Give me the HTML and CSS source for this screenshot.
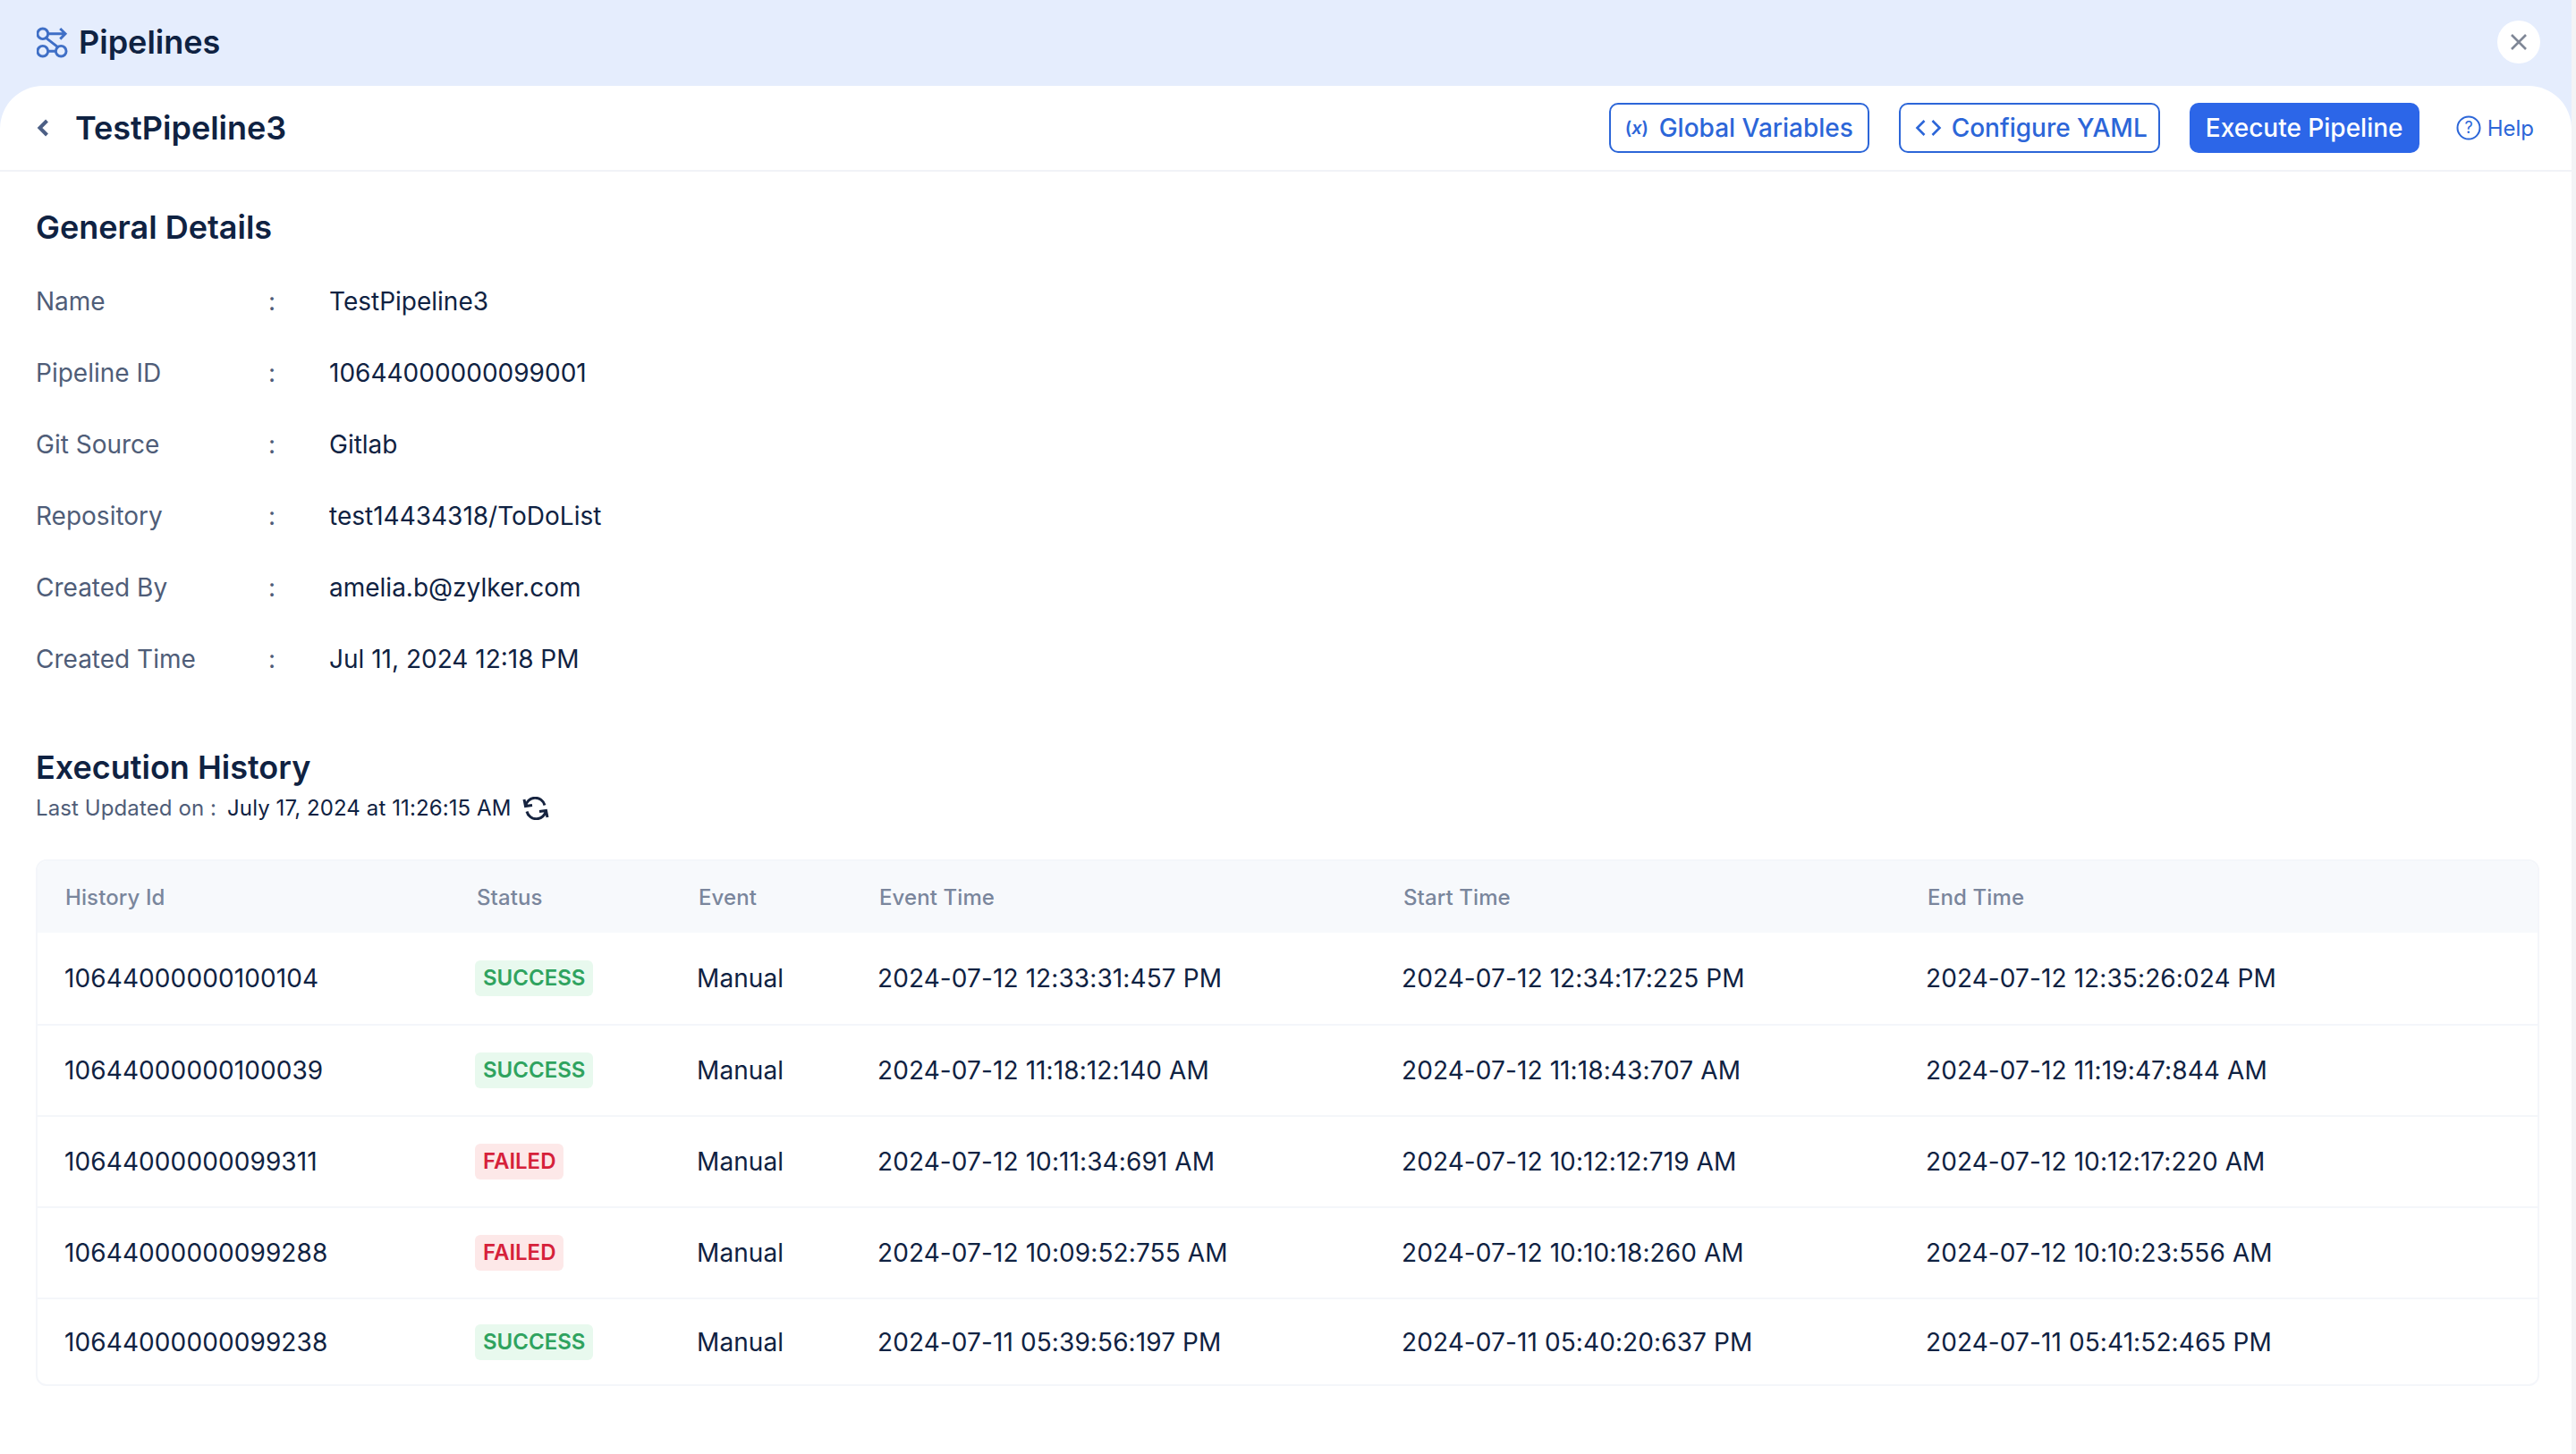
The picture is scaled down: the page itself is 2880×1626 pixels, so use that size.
FILE: index.html
```html
<!DOCTYPE html>
<html lang="en">
<head>
<meta charset="utf-8">
<title>Pipelines</title>
<link rel="stylesheet" href="styles.css">
</head>
<body>
<div class="app">
  <header class="topbar">
    <div class="brand">
      <svg class="brand-icon" viewBox="0 0 36 36" fill="none" stroke="#3f6fc6" stroke-width="3">
        <circle cx="7" cy="8" r="6"/><circle cx="7" cy="28" r="6"/><circle cx="28" cy="28" r="6"/>
        <path d="M13 8H33M27 2L33 8L27 14M11 13L24 23M13 28H22"/>
      </svg>
      <span class="brand-name">Pipelines</span>
    </div>
    <button class="close" aria-label="Close">
      <svg viewBox="0 0 20 20" fill="none" stroke="#7f8796" stroke-width="2.6"><path d="M2 2L18 18M18 2L2 18"/></svg>
    </button>
  </header>
  <main class="panel">
    <div class="subbar">
      <div class="title-group">
        <svg class="back" viewBox="0 0 14 20" fill="none" stroke="#4c5f85" stroke-width="4"><path d="M11.500 2L3.500 10L11.500 18"/></svg>
        <h1 class="title">TestPipeline3</h1>
      </div>
      <div class="actions">
        <button class="btn btn-outline btn-vars"><span class="fx">(<i>x</i>)</span>Global Variables</button>
        <button class="btn btn-outline btn-yaml">
          <svg class="code" viewBox="0 0 30 20" fill="none" stroke="#2c66d8" stroke-width="2.600"><path d="M10.500 2L2.500 10L10.500 18M19.500 2L27.500 10L19.500 18"/></svg>
          Configure YAML
        </button>
        <button class="btn btn-solid">Execute Pipeline</button>
        <a class="help">
          <svg class="help-icon" viewBox="0 0 28 28" fill="none"><circle cx="14" cy="14" r="12.500" stroke="#2c66d8" stroke-width="2"/><text x="14" y="20" text-anchor="middle" class="help-q">?</text></svg>
          Help
        </a>
      </div>
    </div>
    <div class="content">
      <h2 class="section-title">General Details</h2>
      <dl class="details">
        <div class="detail"><dt>Name</dt><dd>TestPipeline3</dd></div>
        <div class="detail"><dt>Pipeline ID</dt><dd>10644000000099001</dd></div>
        <div class="detail"><dt>Git Source</dt><dd>Gitlab</dd></div>
        <div class="detail"><dt>Repository</dt><dd>test14434318/ToDoList</dd></div>
        <div class="detail"><dt>Created By</dt><dd>amelia.b@zylker.com</dd></div>
        <div class="detail"><dt>Created Time</dt><dd>Jul 11, 2024 12:18 PM</dd></div>
      </dl>
      <h2 class="section-title history-title">Execution History</h2>
      <p class="updated">
        <span class="updated-label">Last Updated on :</span>
        <span class="updated-value">July 17, 2024 at 11:26:15 AM</span>
        <svg class="refresh" viewBox="0 0 30 26" fill="none" stroke="#16233f" stroke-width="3"><path d="M3.500 10.500A11 11 0 0 1 25 9.500M2 3L3.500 10.500L11 9.500M26.500 15.500A11 11 0 0 1 5 16.500M28 23L26.500 15.500L19 16.500"/></svg>
      </p>
      <table class="history">
        <colgroup><col class="c1"><col class="c2"><col class="c3"><col class="c4"><col class="c5"><col></colgroup>
        <thead>
          <tr><th>History Id</th><th>Status</th><th>Event</th><th>Event Time</th><th>Start Time</th><th>End Time</th></tr>
        </thead>
        <tbody>
          <tr><td>10644000000100104</td><td><span class="badge ok">SUCCESS</span></td><td>Manual</td><td>2024-07-12 12:33:31:457 PM</td><td>2024-07-12 12:34:17:225 PM</td><td>2024-07-12 12:35:26:024 PM</td></tr>
          <tr><td>10644000000100039</td><td><span class="badge ok">SUCCESS</span></td><td>Manual</td><td>2024-07-12 11:18:12:140 AM</td><td>2024-07-12 11:18:43:707 AM</td><td>2024-07-12 11:19:47:844 AM</td></tr>
          <tr><td>10644000000099311</td><td><span class="badge bad">FAILED</span></td><td>Manual</td><td>2024-07-12 10:11:34:691 AM</td><td>2024-07-12 10:12:12:719 AM</td><td>2024-07-12 10:12:17:220 AM</td></tr>
          <tr><td>10644000000099288</td><td><span class="badge bad">FAILED</span></td><td>Manual</td><td>2024-07-12 10:09:52:755 AM</td><td>2024-07-12 10:10:18:260 AM</td><td>2024-07-12 10:10:23:556 AM</td></tr>
          <tr><td>10644000000099238</td><td><span class="badge ok">SUCCESS</span></td><td>Manual</td><td>2024-07-11 05:39:56:197 PM</td><td>2024-07-11 05:40:20:637 PM</td><td>2024-07-11 05:41:52:465 PM</td></tr>
        </tbody>
      </table>
    </div>
  </main>
</div>
</body>
</html>
```
FILE: styles.css
```css
* { box-sizing: border-box; }
html, body { margin: 0; height: 100%; }
body {
  font-family: Inter, "Liberation Sans", sans-serif;
  color: #0f2242;
  background: #e5edfd;
}
.app { height: 1626px; display: flex; flex-direction: column; border-right: 5px solid #f3f4f6; overflow: hidden; }
.topbar { height: 96px; flex: none; display: flex; align-items: center; justify-content: space-between; padding: 0 35px 2px 41px; }
.brand { display: flex; align-items: center; gap: 12px; }
.brand-icon { width: 35px; height: 35px; }
.brand-name { font-size: 36px; font-weight: 600; line-height: 44px; }
.close { width: 48px; height: 48px; border: 0; padding: 14px; border-radius: 50%; background: #fff; display: flex; }
.close svg { width: 20px; height: 20px; }
.panel { flex: 1; background: #fff; border-radius: 48px 48px 0 0; min-height: 0; }
.subbar { height: 96px; display: flex; align-items: center; justify-content: space-between; padding: 0 42px 0 41px; border-bottom: 2px solid #f1f3f7; }
.title-group { display: flex; align-items: center; gap: 29px; }
.back { width: 14px; height: 20px; }
.title { margin: 0; font-size: 36px; font-weight: 600; line-height: 44px; }
.actions { display: flex; align-items: center; }
.btn { height: 56px; font-family: inherit; font-size: 28px; font-weight: 500; border-radius: 10px; display: flex; align-items: center; justify-content: center; padding: 0; white-space: nowrap; }
.btn-outline { background: #fff; color: #2c66d8; border: 2px solid #2c66d8; justify-content: flex-start; padding-left: 16px; }
.btn-vars { width: 291px; margin-right: 33px; gap: 12px; }
.btn-yaml { width: 292px; margin-right: 33px; gap: 11px; }
.btn-solid { width: 257px; background: #2c66e8; color: #fff; border: 0; margin-right: 41px; }
.fx { width: 26px; text-align: center; font-size: 20px; letter-spacing: 0; font-weight: 600; }
.code { width: 30px; height: 20px; }
.help { display: flex; align-items: center; gap: 7px; font-size: 24px; color: #2c66d8; }
.help-icon { width: 28px; height: 28px; }
.help-q { font-family: Inter, sans-serif; font-size: 18px; fill: #2c66d8; }
.content { padding: 0 36px 0 40px; }
.section-title { margin: 0; font-size: 36px; font-weight: 600; line-height: 44px; }
.content > .section-title:first-child { padding-top: 40px; box-sizing: content-box; }
.details { margin: 21px 0 0; }
.detail { height: 80px; display: flex; align-items: center; font-size: 28px; }
.detail dt { width: 328px; color: #4f5d78; position: relative; }
.detail dt::after { content: ":"; position: absolute; left: 260px; }
.detail dd { margin: 0; }
.history-title { margin-top: 59px; }
.updated { margin: 8px 0 0; display: flex; align-items: center; font-size: 24px; letter-spacing: 0.1px; line-height: 32px; }
.updated-label { color: #4f5d78; margin-right: 12px; }
.refresh { width: 30px; height: 26px; margin-left: 12px; }
.history { width: 100%; margin-top: 41px; table-layout: fixed; border-collapse: separate; border-spacing: 0; border: 2px solid #f4f6fa; border-radius: 12px; overflow: hidden; }
.c1 { width: 489px; } .c2 { width: 248px; } .c3 { width: 202px; } .c4 { width: 586px; } .c5 { width: 586px; }
.history th { height: 80px; background: #f7f9fc; color: #7a869c; font-size: 24px; letter-spacing: 0.1px; font-weight: 500; text-align: left; padding: 0 0 0 2px; }
.history th:first-child { padding-left: 31px; }
.history td { height: 102px; font-size: 28px; letter-spacing: 0.1px; padding: 0; border-top: 2px solid #f4f6fa; white-space: nowrap; }
.history td:first-child { padding-left: 30px; }
.history tbody tr:first-child td { border-top: 0; }
.history tbody tr:last-child td { height: 97px; }
.badge { display: inline-block; height: 40px; line-height: 40px; padding: 0 9px; border-radius: 6px; font-size: 24px; letter-spacing: 0; font-weight: 600; }
.ok { background: #e8f9ee; color: #2fa35f; }
.bad { background: #fde8e8; color: #d6213a; }
```
